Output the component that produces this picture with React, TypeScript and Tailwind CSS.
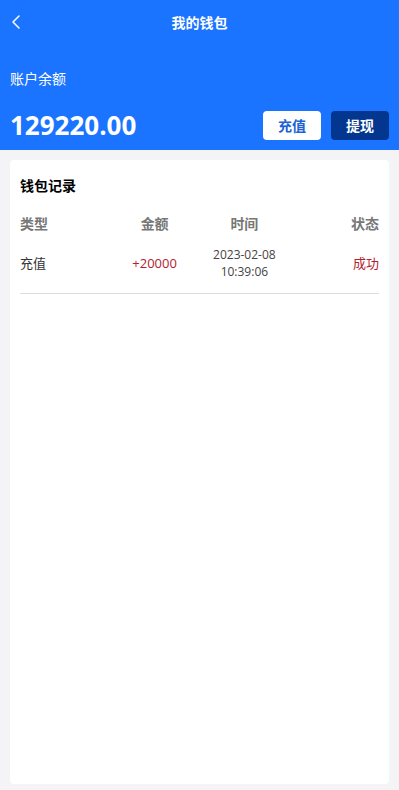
import { ChevronLeft } from "lucide-react";

const records = [
  { type: "充值", amount: "+20000", date: "2023-02-08", time: "10:39:06", status: "成功" },
];

export default function App() {
  return (
    <div
      className="min-h-[790px] bg-[#f4f3f6] flex flex-col"
      style={{ fontFamily: '"Open Sans", "Noto Sans CJK SC", sans-serif' }}
    >
      <div className="bg-[#1a74ff] text-white h-[150px] flex flex-col">
        <div className="relative h-[44px] flex items-center justify-center">
          <ChevronLeft className="absolute left-[4px] top-[10px] w-[24px] h-[24px]" strokeWidth={1.5} />
          <span className="text-[14px] font-bold">我的钱包</span>
        </div>
        <div className="px-[10px] pt-[24px] text-[14px] leading-[22px]">账户余额</div>
        <div className="flex items-center px-[10px] pt-[20px]">
          <span className="text-[26px] font-bold leading-[30px] flex-1">129220.00</span>
          <button className="w-[58px] h-[29px] rounded-[4px] bg-white text-[#1a63d6] text-[14px] font-bold">
            充值
          </button>
          <button className="ml-[10px] w-[58px] h-[29px] rounded-[4px] bg-[#03368e] text-white text-[14px] font-bold">
            提现
          </button>
        </div>
      </div>
      <div className="mx-[10px] mt-[10px] mb-[6px] bg-white rounded-[4px] h-[624px] px-[10px]">
        <div className="pt-[16px] text-[14px] font-bold text-black leading-[20px]">钱包记录</div>
        <div className="grid grid-cols-4 mt-[18px] text-[14px] font-bold text-[#777] leading-[20px]">
          <span>类型</span>
          <span className="text-center">金额</span>
          <span className="text-center">时间</span>
          <span className="text-right">状态</span>
        </div>
        {records.map((r, i) => (
          <div
            key={i}
            className="grid grid-cols-4 items-center border-b border-[#dddddd] h-[60px]"
          >
            <span className="text-[13px] text-[#333]">{r.type}</span>
            <span className="text-center text-[13px] text-[#b3212d]">{r.amount}</span>
            <span className="flex flex-col items-center gap-[1px] text-[12px] text-[#444] leading-[16px]">
              <span>{r.date}</span>
              <span>{r.time}</span>
            </span>
            <span className="text-right text-[13px] text-[#b3212d]">{r.status}</span>
          </div>
        ))}
      </div>
    </div>
  );
}
